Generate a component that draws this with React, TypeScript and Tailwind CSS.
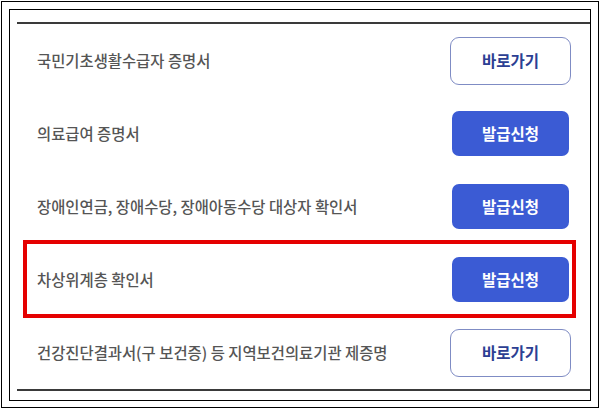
const rows = [
  { label: "국민기초생활수급자 증명서", kind: "link" },
  { label: "의료급여 증명서", kind: "apply" },
  { label: "장애인연금, 장애수당, 장애아동수당 대상자 확인서", kind: "apply" },
  { label: "차상위계층 확인서", kind: "apply", marked: true },
  { label: "건강진단결과서(구 보건증) 등 지역보건의료기관 제증명", kind: "link" },
];

function ActionButton({ kind }: { kind: string }) {
  if (kind === "link") {
    return (
      <button className="flex h-[48px] w-[121px] items-center justify-center rounded-[9px] border border-[#7f8cc4] bg-white text-[15.5px] font-bold text-[#2c3f93]">
        바로가기
      </button>
    );
  }
  return (
    <button className="flex h-[45px] w-[117px] items-center justify-center rounded-[7px] bg-[#3b5bd4] text-[15.5px] font-bold text-white">
      발급신청
    </button>
  );
}

export default function App() {
  return (
    <div
      className="h-[409px] w-[600px] bg-white p-px"
      style={{ fontFamily: '"Noto Sans CJK KR", "Noto Sans", sans-serif' }}
    >
      <div className="h-[407px] border border-black p-[7px]">
        <div className="h-[392px] border border-black pl-[7px] pt-[12px]">
          <div className="border-t-2 border-b-2 border-[#3a3a3a]">
            {rows.map((row) => (
              <div
                key={row.label}
                className="relative flex h-[73px] items-center justify-between pl-[20px] pr-[19px]"
              >
                <span className="text-[15.4px] font-medium text-[#555555]">
                  {row.label}
                </span>
                <div className="flex w-[121px] justify-center">
                  <ActionButton kind={row.kind} />
                </div>
                {row.marked ? (
                  <div className="pointer-events-none absolute left-[6px] top-[-3px] bottom-[-2px] w-[553px] border-[4px] border-[#e50000]" />
                ) : null}
              </div>
            ))}
          </div>
        </div>
      </div>
    </div>
  );
}
